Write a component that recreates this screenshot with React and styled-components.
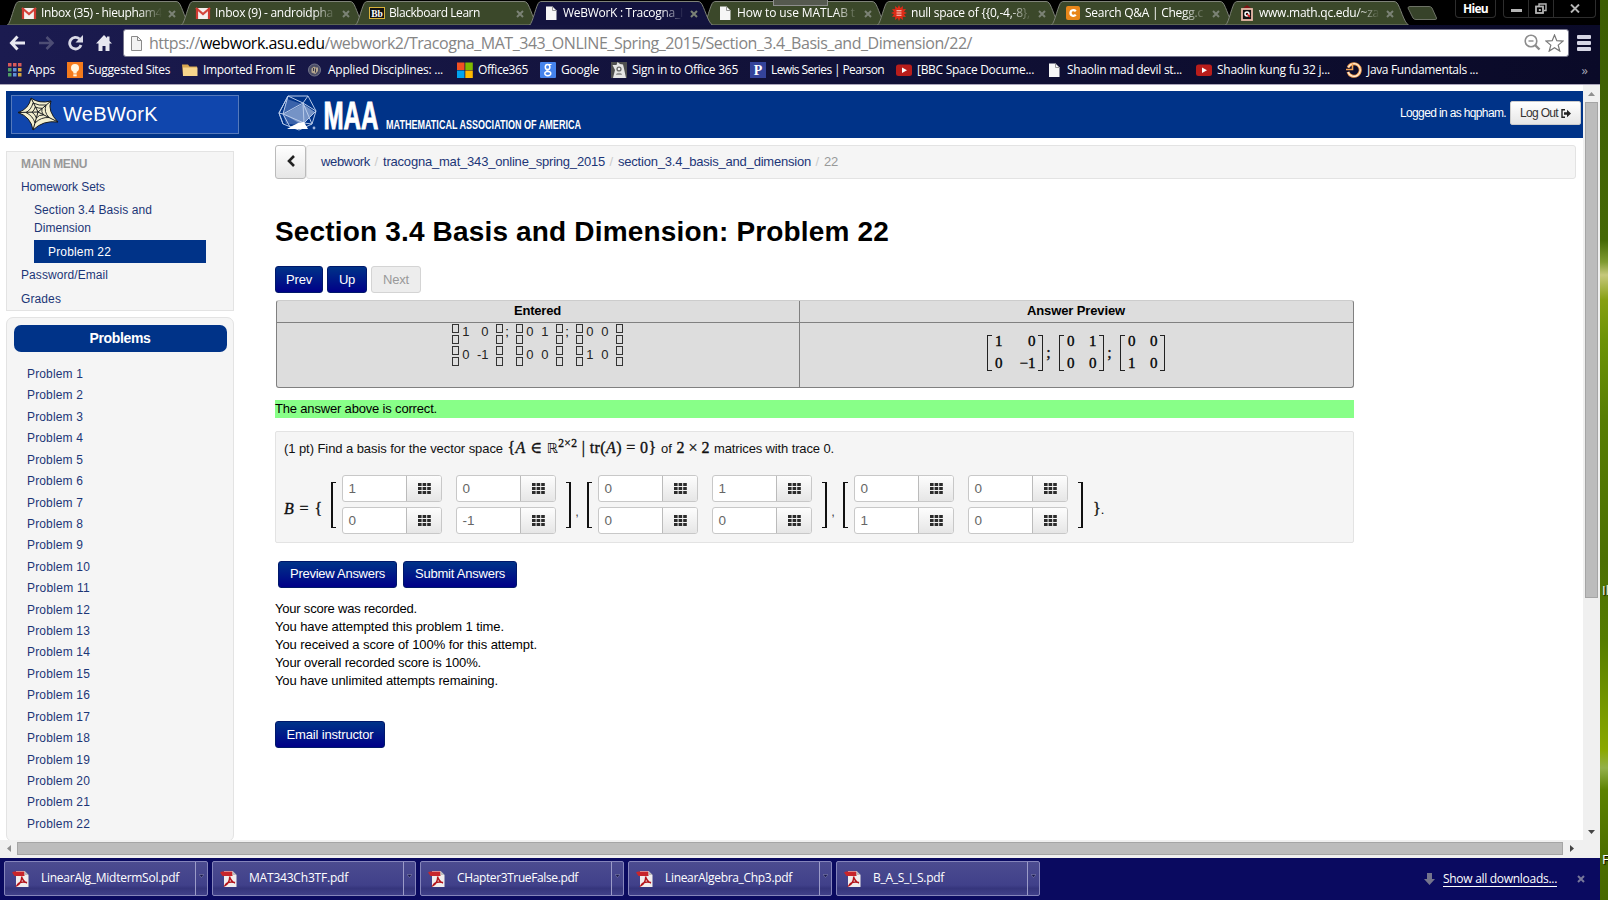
import React, { useLayoutEffect, useRef, useState } from "react";
import styled, { createGlobalStyle } from "styled-components";

const ui = `"Open Sans", "Noto Sans", sans-serif`;
const sans = `"Liberation Sans", Arial, sans-serif`;
const serif = `"Liberation Serif", "DejaVu Serif", serif`;

const GlobalStyle = createGlobalStyle`
  * { box-sizing: border-box; }
  body { margin: 0; overflow: hidden; font-family: ${sans}; font-size: 13px; color: #000; }
  svg { display: block; flex: none; }
  button { font-family: ${sans}; margin: 0; cursor: pointer; }
  a { text-decoration: none; color: inherit; }
`;

/* Text that tracks itself so that it occupies a given width. */
const FitSpan = styled.span`
  display: inline-block;
  white-space: pre;
  flex: none;
`;
function Fit({ w, children }) {
  const ref = useRef(null);
  const [spacing, setSpacing] = useState(0);
  useLayoutEffect(() => {
    const el = ref.current;
    el.style.letterSpacing = "0px";
    const natural = el.getBoundingClientRect().width;
    const next = (w - natural) / Math.max(1, el.textContent.length);
    el.style.letterSpacing = next + "px";
    setSpacing(next);
  }, [w]);
  return <FitSpan ref={ref} style={{ letterSpacing: spacing }}>{children}</FitSpan>;
}

const Desktop = styled.div`
  display: flex;
  width: 1608px;
  height: 900px;
  overflow: hidden;
`;
const Window = styled.div`
  width: 1600px;
  height: 900px;
  display: flex;
  flex-direction: column;
  flex: none;
  background: #fff;
`;
const Wallpaper = styled.div`
  width: 8px;
  flex: none;
  overflow: hidden;
  padding: 581px 0 0 2px;
  display: flex;
  flex-direction: column;
  gap: 251px;
  font: 13px/18px ${ui};
  color: #fff;
  text-shadow: 1px 1px 1px #000;
  background: linear-gradient(#3c5d02 0, #456805 240px, #7f9a30 262px, #c6c87c 275px, #86a012 300px, #6c9306 340px, #577d03 420px, #4c7003 560px, #557c00 640px, #7c9d00 720px, #8aa800 750px, #93b04a 768px, #5c8200 790px, #4b6d00 860px, #486800 100%);
`;

/* ---------- tab strip ---------- */
const TabStrip = styled.div`
  height: 25px;
  background: #000;
  display: flex;
  position: relative;
  padding-left: 7px;
  flex: none;
`;
const TabBox = styled.div`
  width: 184px;
  margin-right: -10px;
  height: 25px;
  position: relative;
  flex: none;
  z-index: ${(p) => (p.$active ? 2 : 1)};
`;
const TabShape = styled.svg`
  position: absolute;
  inset: 0;
`;
const TabContent = styled.div`
  position: relative;
  display: flex;
  align-items: center;
  height: 25px;
  padding: 1px 0 0 14px;
  gap: 4px;
`;
const TabTitle = styled.div`
  width: 121px;
  overflow: hidden;
  font: 12px/18px ${ui};
  color: #fff;
  mask-image: linear-gradient(90deg, #000 98px, transparent 121px);
`;
const TabClose = styled.div`
  margin-left: 2px;
  padding-top: 2px;
`;
const NewTab = styled.div`
  margin: 6px 0 0 8px;
`;
const GreyHandle = styled.div`
  position: absolute;
  left: 773px;
  top: 0;
  width: 55px;
  height: 6px;
  background: #55594f;
  border: 1px solid #8e8e8e;
  border-top: 0;
  z-index: 3;
`;
const WindowControls = styled.div`
  position: absolute;
  right: 4px;
  top: 0;
  display: flex;
  gap: 7px;
`;
const UserTag = styled.div`
  width: 41px;
  height: 18px;
  border: 1px solid #2d2d2d;
  border-top: 0;
  border-radius: 0 0 4px 4px;
  color: #fff;
  font: bold 12px/17px ${ui};
  text-align: center;
`;
const ControlGroup = styled.div`
  display: flex;
  height: 18px;
  border: 1px solid #2d2d2d;
  border-top: 0;
  border-radius: 0 0 4px 4px;
`;
const Control = styled.div`
  width: ${(p) => p.$w}px;
  display: flex;
  align-items: center;
  justify-content: center;
  padding-top: ${(p) => p.$drop || 0}px;
  border-right: ${(p) => (p.$last ? 0 : "1px solid #2d2d2d")};
`;

/* ---------- toolbar ---------- */
const Chrome = styled.div`
  height: 60px;
  flex: none;
  background: linear-gradient(90deg, #1b1b50, #12123a 45%, #0a0a28);
  border-bottom: 1px solid #a9a4b8;
`;
const NavRow = styled.div`
  height: 33px;
  display: flex;
  align-items: center;
  padding: 3px 0 0 9px;
`;
const NavIcons = styled.div`
  width: 114px;
  display: flex;
  align-items: center;
  gap: 12px;
`;
const OmniBox = styled.div`
  width: 1446px;
  height: 28px;
  background: #fff;
  border: 1px solid #77778c;
  border-radius: 3px;
  display: flex;
  align-items: center;
  padding: 0 4px 0 7px;
`;
const Url = styled.div`
  flex: 1;
  padding-left: 7px;
  padding-bottom: 1px;
  font: 16px/24px ${ui};
  color: #858585;
  b { font-weight: 400; color: #000; }
`;
const OmniActions = styled.div`
  display: flex;
  gap: 4px;
`;
const MenuIcon = styled.div`
  width: 14px;
  margin-left: 8px;
  display: flex;
  flex-direction: column;
  gap: 2px;
`;
const MenuBar = styled.div`
  height: 4px;
  border-radius: 1px;
  background: #d6d6e4;
`;
const BookmarkRow = styled.div`
  height: 24px;
  display: flex;
  align-items: center;
  padding-left: 7px;
`;
const Bookmark = styled.div`
  width: ${(p) => p.$w}px;
  display: flex;
  align-items: center;
  gap: 5px;
  flex: none;
  font: 12px/18px ${ui};
  color: #fff;
`;
const Chevrons = styled.div`
  margin-left: auto;
  padding: 0 12px 0 0;
  color: #a5a5b4;
  font: 13px/16px ${ui};
`;

/* ---------- viewport ---------- */
const Viewport = styled.div`
  height: 755px;
  flex: none;
  display: flex;
`;
const Page = styled.div`
  width: 1583px;
  padding: 6px 0 0 6px;
  overflow: hidden;
`;
const Masthead = styled.div`
  height: 47px;
  background: #003388;
  display: flex;
  align-items: center;
  padding: 0 2px 0 5px;
  color: #fff;
`;
const Brand = styled.div`
  width: 228px;
  height: 39px;
  background: #1046ad;
  border: 1px solid #5579bb;
  display: flex;
  align-items: center;
  padding: 0 0 1px 6px;
  gap: 4px;
  font: 20px/22px ${sans};
`;
const MaaLogo = styled.div`
  margin: 0 0 0 39px;
`;
const Session = styled.div`
  margin-left: auto;
  display: flex;
  align-items: center;
  gap: 4px;
  font-size: 12px;
  padding-bottom: 3px;
`;
const LogOut = styled.button`
  width: 71px;
  height: 24px;
  padding: 0;
  display: flex;
  align-items: center;
  justify-content: center;
  gap: 3px;
  background: linear-gradient(#fff, #e6e6e6);
  border: 1px solid #ccc;
  border-radius: 2px;
  color: #333;
  font-size: 12px;
`;
const Columns = styled.div`
  display: flex;
`;
const Sidebar = styled.div`
  width: 228px;
  padding-top: 13px;
  flex: none;
`;
const MenuBox = styled.div`
  height: 160px;
  background: #f5f5f5;
  border: 1px solid #e3e3e3;
  padding: 3px 0 0 14px;
  color: #1c3677;
  font-size: 12px;
`;
const MenuHeading = styled.div`
  height: 20px;
  line-height: 18px;
  font-weight: 700;
  color: #999;
`;
const MenuLink = styled.a`
  display: block;
  height: 24px;
  line-height: 24px;
`;
const SubMenu = styled.div`
  padding: 2px 0 0 13px;
  line-height: 18px;
`;
const CurrentItem = styled.a`
  display: block;
  margin-top: 3px;
  width: 172px;
  height: 23px;
  padding-left: 14px;
  line-height: 24px;
  color: #fff;
  background: #003388;
`;
const ProblemBox = styled.div`
  margin-top: 6px;
  height: 525px;
  background: #f5f5f5;
  border: 1px solid #e3e3e3;
  border-radius: 7px;
  padding: 7px 6px 0 7px;
`;
const ProblemHeading = styled.div`
  height: 27px;
  border-radius: 7px;
  background: #003388;
  color: #fff;
  font: bold 14px/26px ${sans};
  text-align: center;
  margin-bottom: 12px;
  padding-right: 1px;
`;
const ProblemLink = styled.a`
  display: block;
  padding-left: 13px;
  height: 21.43px;
  line-height: 21.43px;
  font-size: 12px;
  color: #1c3677;
`;
const Main = styled.div`
  padding: 7px 0 0 41px;
  flex: 1;
`;
const CrumbBar = styled.div`
  display: flex;
  height: 34px;
  width: 1301px;
`;
const BackButton = styled.button`
  width: 31px;
  height: 34px;
  padding: 0 0 2px;
  display: flex;
  align-items: center;
  justify-content: center;
  background: linear-gradient(#fff, #e6e6e6);
  border: 1px solid #bbb;
  border-radius: 3px;
`;
const Crumbs = styled.div`
  flex: 1;
  background: #f5f5f5;
  border: 1px solid #e3e3e3;
  border-radius: 3px;
  display: flex;
  padding-left: 14px;
  gap: 4.5px;
  line-height: 31px;
  font-size: 13px;
  color: #1c3677;
`;
const Slash = styled.span`
  color: #ccc;
  width: 4px;
`;
const Muted = styled.span`
  color: #999;
`;
const Title = styled.h1`
  margin: 36px 0 0;
  height: 35px;
  font: bold 28px/34px ${sans};
`;
const ButtonRow = styled.div`
  display: flex;
  gap: ${(p) => p.$gap || 4}px;
  padding-left: ${(p) => p.$indent || 0}px;
  margin-top: ${(p) => p.$top}px;
`;
const Button = styled.button`
  width: ${(p) => p.$w}px;
  height: 27px;
  padding: 0 0 ${(p) => p.$lift || 1}px;
  font-size: 13px;
  border-radius: 3px;
  border: 1px solid ${(p) => (p.$off ? "#d4d4d4" : "#00186a")};
  color: ${(p) => (p.$off ? "#999" : "#fff")};
  background: ${(p) => (p.$off ? "#ededed" : "linear-gradient(#003388, #000088)")};
`;
const Results = styled.div`
  margin-top: 7px;
  width: 1078px;
  height: 88px;
  display: grid;
  grid-template-columns: 523px 1fr;
  grid-template-rows: 22px 1fr;
  background: #ddd;
  border: 1px solid #808080;
  border-top-color: #ccc;
  border-radius: 3px;
  margin-left: 1px;
`;
const ResultHead = styled.div`
  font: bold 13px/20px ${sans};
  text-align: center;
  padding-right: 1px;
  border-bottom: 1px solid #808080;
  border-right: ${(p) => (p.$last ? 0 : "1px solid #808080")};
`;
const ResultCell = styled.div`
  display: flex;
  justify-content: center;
  align-items: flex-start;
  padding: ${(p) => p.$pad};
  border-right: ${(p) => (p.$last ? 0 : "1px solid #808080")};
`;
const TextMatrix = styled.div`
  display: flex;
  justify-content: space-between;
  width: ${(p) => p.$w}px;
  color: #222;
`;
const Stack = styled.div`
  display: grid;
  grid-template-rows: repeat(4, 9px);
  gap: 2px;
`;
const Piece = styled.i`
  width: 7px;
  border: 1px solid #333;
`;
const Digits = styled.div`
  display: grid;
  grid-template-columns: 8px 1fr;
  flex: 1;
  padding: 0 7px 0 3px;
  line-height: 23px;
  height: 46px;
  margin-top: -4px;
  text-align: right;
`;
const Separator = styled.div`
  width: ${(p) => p.$w}px;
  padding: ${(p) => p.$drop || 0}px ${(p) => p.$back}px 0 0;
  text-align: center;
  flex: none;
`;
const TypesetMatrix = styled.div`
  width: ${(p) => p.$w}px;
  height: 36px;
  display: flex;
  font: 15px/22px ${serif};
  -webkit-text-stroke: 0.35px #000;
`;
const Bracket = styled.div`
  width: 5px;
  height: 36px;
  flex: none;
  border: solid #222;
  border-width: ${(p) => (p.$right ? "1px 1.5px 1px 0" : "1px 0 1px 1.5px")};
`;
const BigBracket = styled(Bracket)`
  height: 46px;
  margin-top: 2px;
  border-color: #111;
  border-width: ${(p) => (p.$right ? "1px 2px 1px 0" : "1px 0 1px 2px")};
`;
const TypesetDigits = styled.div`
  flex: 1;
  display: grid;
  grid-template-columns: 8px 1fr;
  height: 44px;
  margin: -5px 2px 0 3px;
  text-align: right;
`;
const Verdict = styled.div`
  margin-top: 12px;
  width: 1079px;
  height: 18px;
  line-height: 17px;
  background: #88ff88;
`;
const Problem = styled.div`
  margin-top: 13px;
  width: 1079px;
  height: 112px;
  background: #f5f5f5;
  border: 1px solid #e3e3e3;
  border-radius: 2px;
  padding: 6px 0 0 8px;
`;
const Statement = styled.div`
  display: flex;
  gap: 4.5px;
  height: 22px;
  line-height: 21px;
  color: #111;
`;
const MathText = styled.span`
  font: 16px/20px ${serif};
  color: #111;
  -webkit-text-stroke: 0.35px #111;
  sup { font-size: 11.5px; line-height: 0; vertical-align: 6px; }
`;
const Real = styled.span`
  font: 14px/14px "DejaVu Sans", sans-serif;
  -webkit-text-stroke: 0;
`;
const AnswerRow = styled.div`
  display: flex;
  margin-top: 14px;
  align-items: center;
  height: 60px;
`;
const Lead = styled.div`
  width: 47px;
  padding-top: 9px;
  white-space: nowrap;
`;
const Tail = styled.div`
  padding: 9px 0 0 10px;
`;
const Comma = styled.div`
  width: 16px;
  text-align: center;
  padding: 14px 4px 0 0;
  color: #444;
`;
const Cells = styled.div`
  display: grid;
  grid-template-columns: auto auto;
  gap: 5px 14px;
  margin: 0 ${(p) => p.$right}px 0 ${(p) => p.$left}px;
`;
const Field = styled.div`
  width: ${(p) => p.$w}px;
  height: 27px;
  display: flex;
  border: 1px solid #c8c8c8;
  border-radius: 3px;
  background: #fff;
  overflow: hidden;
`;
const FieldValue = styled.div`
  flex: 1;
  padding-left: 5.5px;
  line-height: 26px;
  font-size: 13.5px;
  color: #666;
`;
const FieldButton = styled.div`
  width: 35px;
  display: flex;
  align-items: center;
  justify-content: center;
  border-left: 1px solid #bbb;
  background: linear-gradient(#fdfdfd, #e6e6e6);
`;
const Messages = styled.div`
  margin-top: 12px;
  line-height: 18px;
  display: flex;
  flex-direction: column;
  align-items: flex-start;
`;

/* ---------- scroll bars ---------- */
const VerticalBar = styled.div`
  width: 17px;
  background: #f0f0f0;
  display: flex;
  flex-direction: column;
  align-items: center;
`;
const BarArrow = styled.div`
  width: 17px;
  height: 17px;
  display: flex;
  align-items: center;
  justify-content: center;
  flex: none;
`;
const VerticalThumb = styled.div`
  width: 13px;
  height: 496px;
  background: #bcbcbc;
  border: 1px solid #a5a5a5;
  margin-bottom: auto;
`;
const HorizontalBar = styled.div`
  height: 18px;
  flex: none;
  background: #f0f0f0;
  display: flex;
  align-items: center;
  padding-bottom: 1px;
`;
const HorizontalThumb = styled.div`
  width: 1546px;
  height: 13px;
  background: #bcbcbc;
  border: 1px solid #a5a5a5;
`;

/* ---------- downloads ---------- */
const Downloads = styled.div`
  flex: 1;
  background: #0a0a60;
  display: flex;
  align-items: flex-start;
  padding: 3px 15px 0 4px;
  gap: 4px;
  font: 12px/18px ${ui};
  color: #fff;
`;
const Download = styled.div`
  width: 204px;
  height: 35px;
  display: flex;
  align-items: center;
  border: 1px solid #8585bb;
  border-radius: 2px;
  background: linear-gradient(#4c4c90, #40408a 70%, #35357c 80%, #40408a);
  padding-left: 7px;
  flex: none;
`;
const DownloadName = styled.div`
  flex: 1;
  padding: 0 0 1px 12px;
`;
const DownloadMenu = styled.div`
  height: 33px;
  width: 12px;
  flex: none;
  border-left: 1px solid #9b9bc8;
  display: flex;
  align-items: center;
  justify-content: center;
  padding-bottom: 6px;
`;
const ShowAll = styled.div`
  margin-left: auto;
  height: 36px;
  display: flex;
  align-items: center;
  gap: 8px;
`;
const ShowAllLink = styled.span`
  line-height: 14px;
  border-bottom: 1px solid #fff;
`;
const ShelfClose = styled.div`
  margin-left: 12px;
`;

/* ---------- icons ---------- */
const Cross = ({ color = "#7b8275", s = 8 }) => (
  <svg width={s} height={s} viewBox="0 0 8 8"><path d="M1 1l6 6M7 1L1 7" stroke={color} strokeWidth="2" /></svg>
);
const spikes = Array.from({ length: 24 }, (_, i) => {
  const r = i % 2 ? 5.2 : 8;
  const a = (i * Math.PI) / 12;
  return `${(8 + r * Math.sin(a)).toFixed(2)},${(8 - r * Math.cos(a)).toFixed(2)}`;
}).join(" ");
const icons = {
  gmail: <svg width="16" height="16"><rect x="1" y="3" width="14" height="11" fill="#f4f0ee" /><path d="M1 3l7 6 7-6" fill="none" stroke="#d5453c" strokeWidth="2.2" /><path d="M2 3v11M14 3v11" stroke="#cf3a31" strokeWidth="2.2" /></svg>,
  bb: <svg width="16" height="16"><rect x="0.5" y="2.5" width="15" height="11" fill="#111" stroke="#d9b23a" /><text x="8" y="11.5" textAnchor="middle" fontFamily="Liberation Serif" fontWeight="700" fontSize="9.5" fill="#fff">Bb</text></svg>,
  page: <svg width="16" height="16"><path d="M3 1.5h6.500l4 4V15H3z" fill="#f6f6f6" /><path d="M9.500 1.500v4h4" fill="none" stroke="#999" /></svg>,
  wolfram: <svg width="16" height="16"><polygon points={spikes} fill="#dd2b17" /><path d="M5.500 5.700h5M5.500 8h5M5.500 10.300h5" stroke="#ffd9cf" strokeWidth="1.100" /></svg>,
  chegg: <svg width="16" height="16"><rect x="1" y="1" width="14" height="14" rx="2" fill="#e8861a" /><path d="M10.800 6.200C9 4.300 5.500 5 5.500 8s3.500 3.700 5.300 1.800" fill="none" stroke="#fff" strokeWidth="2.300" /></svg>,
  qc: <svg width="16" height="16"><path d="M8 0L4 3h8z" fill="#7c1414" /><rect x="3" y="4" width="10" height="11" fill="#111" stroke="#e8b9a8" strokeWidth="1.800" /><circle cx="8" cy="9" r="2" fill="none" stroke="#fff" strokeWidth="1.500" /><path d="M8 9l3 3" stroke="#d22" strokeWidth="1.400" /></svg>,
  apps: <svg width="16" height="16">{["#d85a5a", "#d85a5a", "#d85a5a", "#4f9e63", "#5f8fd8", "#d8a53c", "#4f9e63", "#5f8fd8", "#d8a53c"].map((c, i) => <rect key={i} x={1 + (i % 3) * 5} y={1 + Math.floor(i / 3) * 5} width="3.500" height="3.500" fill={c} />)}</svg>,
  bulb: <svg width="16" height="16"><rect width="16" height="16" fill="#f47a1c" /><circle cx="8" cy="6" r="4" fill="#fff6e0" /><rect x="6.300" y="8" width="3.400" height="3.500" fill="#fff6e0" /><rect x="6.300" y="12.300" width="3.400" height="2" fill="#fff6e0" /></svg>,
  folder: <svg width="16" height="16"><path d="M0 2.500h6l1.500 2H15v9.500H1z" fill="#d9a850" /><path d="M1 5.500h14.500V14H1z" fill="#f7d58c" /></svg>,
  seal: <svg width="16" height="16"><circle cx="7.500" cy="8" r="6" fill="#4b4d66" stroke="#74768c" /><path d="M4.500 10.500V6.500L7 4.500l1.500 1 2.500 0V9l-2.500 3" fill="#b5a68e" /><path d="M6.500 6v3M8.500 6.500v4" stroke="#34364e" /></svg>,
  office: <svg width="16" height="16"><rect width="7.500" height="7.500" y=".5" fill="#f25022" /><rect x="8.300" y=".5" width="7.500" height="7.500" fill="#7fba00" /><rect y="8.500" width="7.500" height="7.500" fill="#00a4ef" /><rect x="8.300" y="8.500" width="7.500" height="7.500" fill="#ffb900" /></svg>,
  google: <svg width="16" height="16"><rect width="16" height="16" rx="1" fill="#4583ec" /><g fill="none" stroke="#fff"><ellipse cx="7.600" cy="5" rx="2.300" ry="2.600" strokeWidth="1.500" /><path d="M9 2.500h2.500M7.500 7.600c-2 1.400 1.500 1.300 2.300 2.300" strokeWidth="1.200" /><ellipse cx="7.800" cy="11.600" rx="3" ry="2.100" strokeWidth="1.400" /></g></svg>,
  sign: <svg width="16" height="16"><rect width="16" height="16" fill="#505050" /><path d="M1.500 3l4 0L6.500 0 9 2l3 .5 1 4 2 9.500H2L4 8z" fill="#e5e5e5" /><circle cx="8" cy="7" r="2.600" fill="#666" /><circle cx="8" cy="7" r="1.300" fill="#eee" /><path d="M5 13c0-3 6-3 6 0z" fill="#999" /></svg>,
  pearson: <svg width="16" height="16"><rect width="16" height="16" fill="#34439a" /><text x="8" y="13" textAnchor="middle" fontFamily="Liberation Serif" fontWeight="700" fontSize="14" fill="#fff">P</text></svg>,
  youtube: <svg width="16" height="16"><rect y="2.500" width="16" height="11.500" rx="2.500" fill="#b91d1b" /><path d="M6 5.500v5.500l5-2.750z" fill="#fff" /></svg>,
  java: <svg width="16" height="16"><path d="M2.200 5.500A6.300 6.300 0 1 1 2 10" fill="none" stroke="#f3a052" strokeWidth="3" /><path d="M2.200 5.500A6.300 6.300 0 1 1 2 10" fill="none" stroke="#fff2e2" strokeWidth="1.200" /><path d="M0 7.500h6.500V1.500" stroke="#f3a052" strokeWidth="1.600" fill="none" /></svg>,
};

const PdfIcon = () => (
  <svg width="17" height="16" viewBox="0 0 17 16">
    <path d="M4 0h8.500L16.500 4v12H4z" fill="#f1eded" />
    <path d="M0 1.500L2 .5h10.500V5H2.500z" fill="#c8252b" />
    <path d="M12.500 0v4h4z" fill="#bbb" />
    <path d="M9.500 5.500c.8 3 2.500 5.500 5.500 6.500M9.800 6C9.500 9.500 8 13 5 14.500c1.500-3 5.500-4 10-3" fill="none" stroke="#b3141b" strokeWidth="1.500" />
  </svg>
);
const KeypadIcon = () => (
  <svg width="13" height="11">
    {[0, 1, 2].map((r) => [0, 1, 2].map((c) => <rect key={r + "-" + c} x={c * 4.600} y={r * 4} width="3.600" height="3" fill="#2b2b2b" />))}
  </svg>
);
const WebLogo = () => (
  <svg width="41" height="34" viewBox="0 0 41 34">
    <path d="M0 15.500Q11 12 13 1Q21 7 33 4Q29 14 40 25Q25 23 15 33Q13 20 0 15.500Z" fill="#f3efcf" stroke="#15181c" strokeWidth="1" />
    <path d="M0 15.500L20 15M13 1L20 15M33 4L20 15M40 25L20 15M15 33L20 15" stroke="#15181c" strokeWidth="1" />
    <path d="M8 15.500Q13 13 15 6Q21 9 28 8Q25.500 15 31 20.500Q23 20 17 26Q15 19 8 15.500ZM14 15.300Q16.500 13 17.300 10Q21 11.500 24 11.300Q23 15 25.500 18Q21 17.500 18.400 21Q17 17 14 15.300Z" fill="none" stroke="#15181c" strokeWidth=".9" />
  </svg>
);
const MaaMark = () => (
  <svg width="316" height="46" viewBox="0 -2 316 46">
    <path d="M9 5L24 10L33 17L25 31L8 30L5 20Z" fill="#3a62aa" />
    <path d="M25 10L6 20L24 31L37 18Z" fill="#7593c6" />
    <g fill="none" stroke="#b9cbea" strokeWidth="1">
      <path d="M10 2L30 2L38 17L34 30L21 36L5 30L1 19Z" />
      <path d="M10 2L25 9L30 2M25 9L38 17M25 9L5 20L10 2M25 9L26 29L5 20L1 19M26 29L38 17M26 29L34 30M26 29L12 33L5 20M25 9L34 30M10 2L1 19L5 30" />
    </g>
    <path d="M20 29L26 28L30 35L9 35Z" fill="#fff" />
    <circle cx="36" cy="34" r="1.400" fill="#9db4de" />
    <text x="45.500" y="35" fontFamily="Liberation Sans" fontWeight="700" fontSize="38" fill="#fff" stroke="#fff" strokeWidth=".9" textLength="55" lengthAdjust="spacingAndGlyphs">MAA</text>
    <text x="108" y="34.500" fontFamily="Liberation Sans" fontWeight="700" fontSize="12.500" fill="#fff" textLength="195" lengthAdjust="spacingAndGlyphs">MATHEMATICAL ASSOCIATION OF AMERICA</text>
  </svg>
);

/* ---------- data ---------- */
const tabs = [
  ["gmail", "Inbox (35) - hieupham4", 121],
  ["gmail", "Inbox (9) - androidpha", 118],
  ["bb", "Blackboard Learn", 91],
  ["page", "WeBWorK : Tracogna_I", 120, true],
  ["page", "How to use MATLAB t", 118],
  ["wolfram", "null space of {{0,-4,-8},", 119],
  ["chegg", "Search Q&A | Chegg.c", 118],
  ["qc", "www.math.qc.edu/~za", 120],
];
const bookmarks = [
  ["apps", "Apps", 27, 60],
  ["bulb", "Suggested Sites", 82, 115],
  ["folder", "Imported From IE", 92, 125],
  ["seal", "Applied Disciplines: ...", 115, 150],
  ["office", "Office365", 50, 83],
  ["google", "Google", 38, 71],
  ["sign", "Sign in to Office 365", 106, 139],
  ["pearson", "Lewis Series | Pearson", 113, 146],
  ["youtube", "[BBC Space Docume...", 117, 150],
  ["page", "Shaolin mad devil st...", 115, 150],
  ["youtube", "Shaolin kung fu 32 j...", 113, 150],
  ["java", "Java Fundamentals ...", 111, 140],
];
const downloads = [
  ["LinearAlg_MidtermSol.pdf", 138],
  ["MAT343Ch3TF.pdf", 99],
  ["CHapter3TrueFalse.pdf", 121],
  ["LinearAlgebra_Chp3.pdf", 127],
  ["B_A_S_I_S.pdf", 71],
];
const matrices = [
  [["1", "0"], ["0", "-1"]],
  [["0", "1"], ["0", "0"]],
  [["0", "0"], ["1", "0"]],
];
const messages = [
  ["Your score was recorded.", 142],
  ["You have attempted this problem 1 time.", 229],
  ["You received a score of 100% for this attempt.", 262],
  ["Your overall recorded score is 100%.", 206],
  ["You have unlimited attempts remaining.", 223],
];

function Tab({ icon, title, w, active }) {
  return (
    <TabBox $active={active}>
      <TabShape width="184" height="25">
        <path d="M0.500 25C4 23 7 4 10.500 2Q11 1.500 13 1.500H169Q171 1.500 172 3C175 6 179 23 183.500 25Z" fill={active ? "#13133e" : "#3b482a"} stroke="#7e8278" strokeWidth="1" />
        {active && <rect x="2" y="24" width="180" height="1" fill="#13133e" />}
      </TabShape>
      <TabContent>
        {icons[icon]}
        <TabTitle><Fit w={w}>{title}</Fit></TabTitle>
        <TabClose><Cross /></TabClose>
      </TabContent>
    </TabBox>
  );
}

const Pieces = () => <Stack><Piece /><Piece /><Piece /><Piece /></Stack>;

export default function App() {
  return (
    <Desktop>
      <GlobalStyle />
      <Window>
        <TabStrip>
          {tabs.map(([icon, title, w, active]) => <Tab key={title} icon={icon} title={title} w={w} active={active} />)}
          <NewTab>
            <svg width="31" height="14"><path d="M1 2Q1 .5 3 .5H22Q24 .5 25 2L29.500 12Q30 13.500 28 13.500H9Q7 13.500 6 12Z" fill="#37432a" stroke="#6c7165" /></svg>
          </NewTab>
          <GreyHandle />
          <WindowControls>
            <UserTag><Fit w={25}>Hieu</Fit></UserTag>
            <ControlGroup>
              <Control $w={25} $drop={3}><svg width="11" height="3"><rect width="11" height="3" fill="#b5b5b5" /></svg></Control>
              <Control $w={25}><svg width="12" height="11"><path d="M4 3V1h7v6.500H9" fill="none" stroke="#b5b5b5" strokeWidth="1.400" /><rect x="1" y="3.500" width="7" height="6.500" fill="none" stroke="#b5b5b5" strokeWidth="1.800" /><rect x="3.800" y="6" width="2" height="2" fill="#b5b5b5" /></svg></Control>
              <Control $w={41} $last><svg width="10" height="9"><path d="M1 0.500l8 8M9 .5l-8 8" stroke="#b5b5b5" strokeWidth="1.900" /></svg></Control>
            </ControlGroup>
          </WindowControls>
        </TabStrip>
        <Chrome>
          <NavRow>
            <NavIcons>
              <svg width="17" height="16"><path d="M8.500 1.500L2.500 8l6 6.500M3 8h13" fill="none" stroke="#e8e8f0" strokeWidth="3" /></svg>
              <svg width="17" height="16"><path d="M8.500 2l6 6-6 6M14 8H1" fill="none" stroke="#4d4d74" strokeWidth="2.600" /></svg>
              <svg width="17" height="16"><path d="M12.500 4A5.800 5.800 0 1 0 14 10" fill="none" stroke="#d9d9e6" strokeWidth="2.800" /><path d="M16 0v7.500H8.500z" fill="#d9d9e6" /></svg>
              <svg width="17" height="16"><path d="M8 0L0 8.500h2.500V16H6.500v-5h3v5h4V8.500H16L13.500 6V1.500H11V3z" fill="#e8e8f0" /></svg>
            </NavIcons>
            <OmniBox>
              <svg width="11" height="15"><path d="M.5 .5h6l4 4v10H.5z" fill="#f3f3f3" stroke="#8a8a8a" /><path d="M6.500 .5v4h4" fill="none" stroke="#8a8a8a" /></svg>
              <Url><Fit w={823}>https://<b>webwork.asu.edu</b>/webwork2/Tracogna_MAT_343_ONLINE_Spring_2015/Section_3.4_Basis_and_Dimension/22/</Fit></Url>
              <OmniActions>
                <svg width="17" height="17"><circle cx="7" cy="7" r="5.800" fill="none" stroke="#8c8c8c" strokeWidth="1.600" /><path d="M11 11l4.500 4.500" stroke="#8c8c8c" strokeWidth="2.400" /><path d="M4.500 7h5" stroke="#8c8c8c" strokeWidth="1.400" /></svg>
                <svg width="19" height="18"><path d="M9.500 1l2.300 5.700 6.200.4-4.800 4 1.600 6-5.300-3.400-5.300 3.400 1.600-6-4.800-4 6.200-.4z" fill="#fff" stroke="#777" strokeWidth="1.200" /></svg>
              </OmniActions>
            </OmniBox>
            <MenuIcon><MenuBar /><MenuBar /><MenuBar /></MenuIcon>
          </NavRow>
          <BookmarkRow>
            {bookmarks.map(([icon, label, w, pitch]) => (
              <Bookmark key={label} $w={pitch}>{icons[icon]}<Fit w={w}>{label}</Fit></Bookmark>
            ))}
            <Chevrons>»</Chevrons>
          </BookmarkRow>
        </Chrome>

        <Viewport>
          <Page>
            <Masthead>
              <Brand><WebLogo /><Fit w={95}>WeBWorK</Fit></Brand>
              <MaaLogo><MaaMark /></MaaLogo>
              <Session>
                <Fit w={106}>Logged in as hqpham.</Fit>
                <LogOut>
                  <Fit w={38}>Log Out</Fit>
                  <svg width="10" height="9"><path d="M4 .7H1v7.600h3" fill="none" stroke="#222" strokeWidth="1.400" /><path d="M3 3.200h3V.8L10 4.500 6 8.200V5.800H3z" fill="#222" /></svg>
                </LogOut>
              </Session>
            </Masthead>
            <Columns>
              <Sidebar>
                <MenuBox>
                  <MenuHeading><Fit w={66}>MAIN MENU</Fit></MenuHeading>
                  <MenuLink><Fit w={84}>Homework Sets</Fit></MenuLink>
                  <SubMenu>
                    <Fit w={118}>Section 3.4 Basis and</Fit><br />
                    <Fit w={57}>Dimension</Fit>
                    <CurrentItem><Fit w={63}>Problem 22</Fit></CurrentItem>
                  </SubMenu>
                  <MenuLink><Fit w={87}>Password/Email</Fit></MenuLink>
                  <MenuLink><Fit w={40}>Grades</Fit></MenuLink>
                </MenuBox>
                <ProblemBox>
                  <ProblemHeading><Fit w={61}>Problems</Fit></ProblemHeading>
                  {Array.from({ length: 22 }, (_, i) => (
                    <ProblemLink key={i}><Fit w={i < 9 ? 56 : 63}>{`Problem ${i + 1}`}</Fit></ProblemLink>
                  ))}
                </ProblemBox>
              </Sidebar>
              <Main>
                <CrumbBar>
                  <BackButton><svg width="8" height="12"><path d="M7 1L2 6l5 5" fill="none" stroke="#222" strokeWidth="2.600" /></svg></BackButton>
                  <Crumbs>
                    <Fit w={49}>webwork</Fit><Slash>/</Slash>
                    <Fit w={222}>tracogna_mat_343_online_spring_2015</Fit><Slash>/</Slash>
                    <Fit w={193}>section_3.4_basis_and_dimension</Fit><Slash>/</Slash>
                    <Muted><Fit w={14}>22</Fit></Muted>
                  </Crumbs>
                </CrumbBar>
                <Title><Fit w={614}>Section 3.4 Basis and Dimension: Problem 22</Fit></Title>
                <ButtonRow $top={16}>
                  <Button $w={48}><Fit w={26}>Prev</Fit></Button>
                  <Button $w={40}><Fit w={16}>Up</Fit></Button>
                  <Button $w={50} $off><Fit w={26}>Next</Fit></Button>
                </ButtonRow>
                <Results>
                  <ResultHead><Fit w={47}>Entered</Fit></ResultHead>
                  <ResultHead $last><Fit w={98}>Answer Preview</Fit></ResultHead>
                  <ResultCell $pad="1px 2px 0 0">
                    {matrices.map((m, i) => (
                      <React.Fragment key={i}>
                        {i > 0 && <Separator $w={13} $back={4}>;</Separator>}
                        <TextMatrix $w={i ? 47 : 51}>
                          <Pieces />
                          <Digits>{m.flat().map((v, k) => <span key={k}>{v}</span>)}</Digits>
                          <Pieces />
                        </TextMatrix>
                      </React.Fragment>
                    ))}
                  </ResultCell>
                  <ResultCell $last $pad="12px 2px 0 0">
                    {matrices.map((m, i) => (
                      <React.Fragment key={i}>
                        {i > 0 && <Separator $w={16} $drop={8} $back={4}><MathText>;</MathText></Separator>}
                        <TypesetMatrix $w={i ? 45 : 56}>
                          <Bracket />
                          <TypesetDigits>{m.flat().map((v, k) => <span key={k}>{v.replace("-", "−")}</span>)}</TypesetDigits>
                          <Bracket $right />
                        </TypesetMatrix>
                      </React.Fragment>
                    ))}
                  </ResultCell>
                </Results>
                <Verdict><Fit w={162}>The answer above is correct.</Fit></Verdict>
                <Problem>
                  <Statement>
                    <Fit w={219}>(1 pt) Find a basis for the vector space</Fit>
                    <MathText><Fit w={149}>{"{"}<i>A</i> ∈ <Real>ℝ</Real><sup>2×2</sup> | tr(<i>A</i>) = {"0}"}</Fit></MathText>
                    <Fit w={11}>of</Fit>
                    <MathText><Fit w={33}>2 × 2</Fit></MathText>
                    <Fit w={120}>matrices with trace 0.</Fit>
                  </Statement>
                  <AnswerRow>
                    <Lead><MathText><Fit w={39}><i>B</i> = {"{"}</Fit></MathText></Lead>
                    {matrices.map((m, i) => (
                      <React.Fragment key={i}>
                        {i > 0 && <Comma>,</Comma>}
                        <BigBracket />
                        <Cells $left={6} $right={10}>
                          {m.flat().map((v, k) => (
                            <Field key={k} $w={100}>
                              <FieldValue>{v}</FieldValue>
                              <FieldButton><KeypadIcon /></FieldButton>
                            </Field>
                          ))}
                        </Cells>
                        <BigBracket $right />
                      </React.Fragment>
                    ))}
                    <Tail><MathText>{"}"}</MathText>.</Tail>
                  </AnswerRow>
                </Problem>
                <ButtonRow $top={18} $gap={6} $indent={3}>
                  <Button $w={119} $lift={3}><Fit w={95}>Preview Answers</Fit></Button>
                  <Button $w={114} $lift={3}><Fit w={90}>Submit Answers</Fit></Button>
                </ButtonRow>
                <Messages>
                  {messages.map(([text, w]) => <Fit key={text} w={w}>{text}</Fit>)}
                </Messages>
                <ButtonRow $top={31}>
                  <Button $w={110}><Fit w={87}>Email instructor</Fit></Button>
                </ButtonRow>
              </Main>
            </Columns>
          </Page>
          <VerticalBar>
            <BarArrow><svg width="7" height="4"><path d="M0 4l3.500-4L7 4z" fill="#8f8f8f" /></svg></BarArrow>
            <VerticalThumb />
            <BarArrow><svg width="7" height="4"><path d="M0 0h7L3.500 4z" fill="#444" /></svg></BarArrow>
          </VerticalBar>
        </Viewport>
        <HorizontalBar>
          <BarArrow><svg width="4" height="7"><path d="M4 0v7L0 3.500z" fill="#8f8f8f" /></svg></BarArrow>
          <HorizontalThumb />
          <BarArrow><svg width="4" height="7"><path d="M0 0v7l4-3.500z" fill="#444" /></svg></BarArrow>
        </HorizontalBar>
        <Downloads>
          {downloads.map(([name, w]) => (
            <Download key={name}>
              <PdfIcon />
              <DownloadName>
                <Fit w={w}>{name}</Fit>
              </DownloadName>
              <DownloadMenu>
                <svg width="5" height="4"><path d="M0 .5h5L2.500 3.500z" fill="#1a1a4c" stroke="#9090bd" strokeWidth=".5" /></svg>
              </DownloadMenu>
            </Download>
          ))}
          <ShowAll>
            <svg width="11" height="12"><path d="M3 0h5v6h3l-5.500 6L0 6h3z" fill="#74748c" /></svg>
            <ShowAllLink><Fit w={114}>Show all downloads...</Fit></ShowAllLink>
            <ShelfClose><Cross color="#77779a" /></ShelfClose>
          </ShowAll>
        </Downloads>
      </Window>
      <Wallpaper><span>Il</span><span>F</span></Wallpaper>
    </Desktop>
  );
}
